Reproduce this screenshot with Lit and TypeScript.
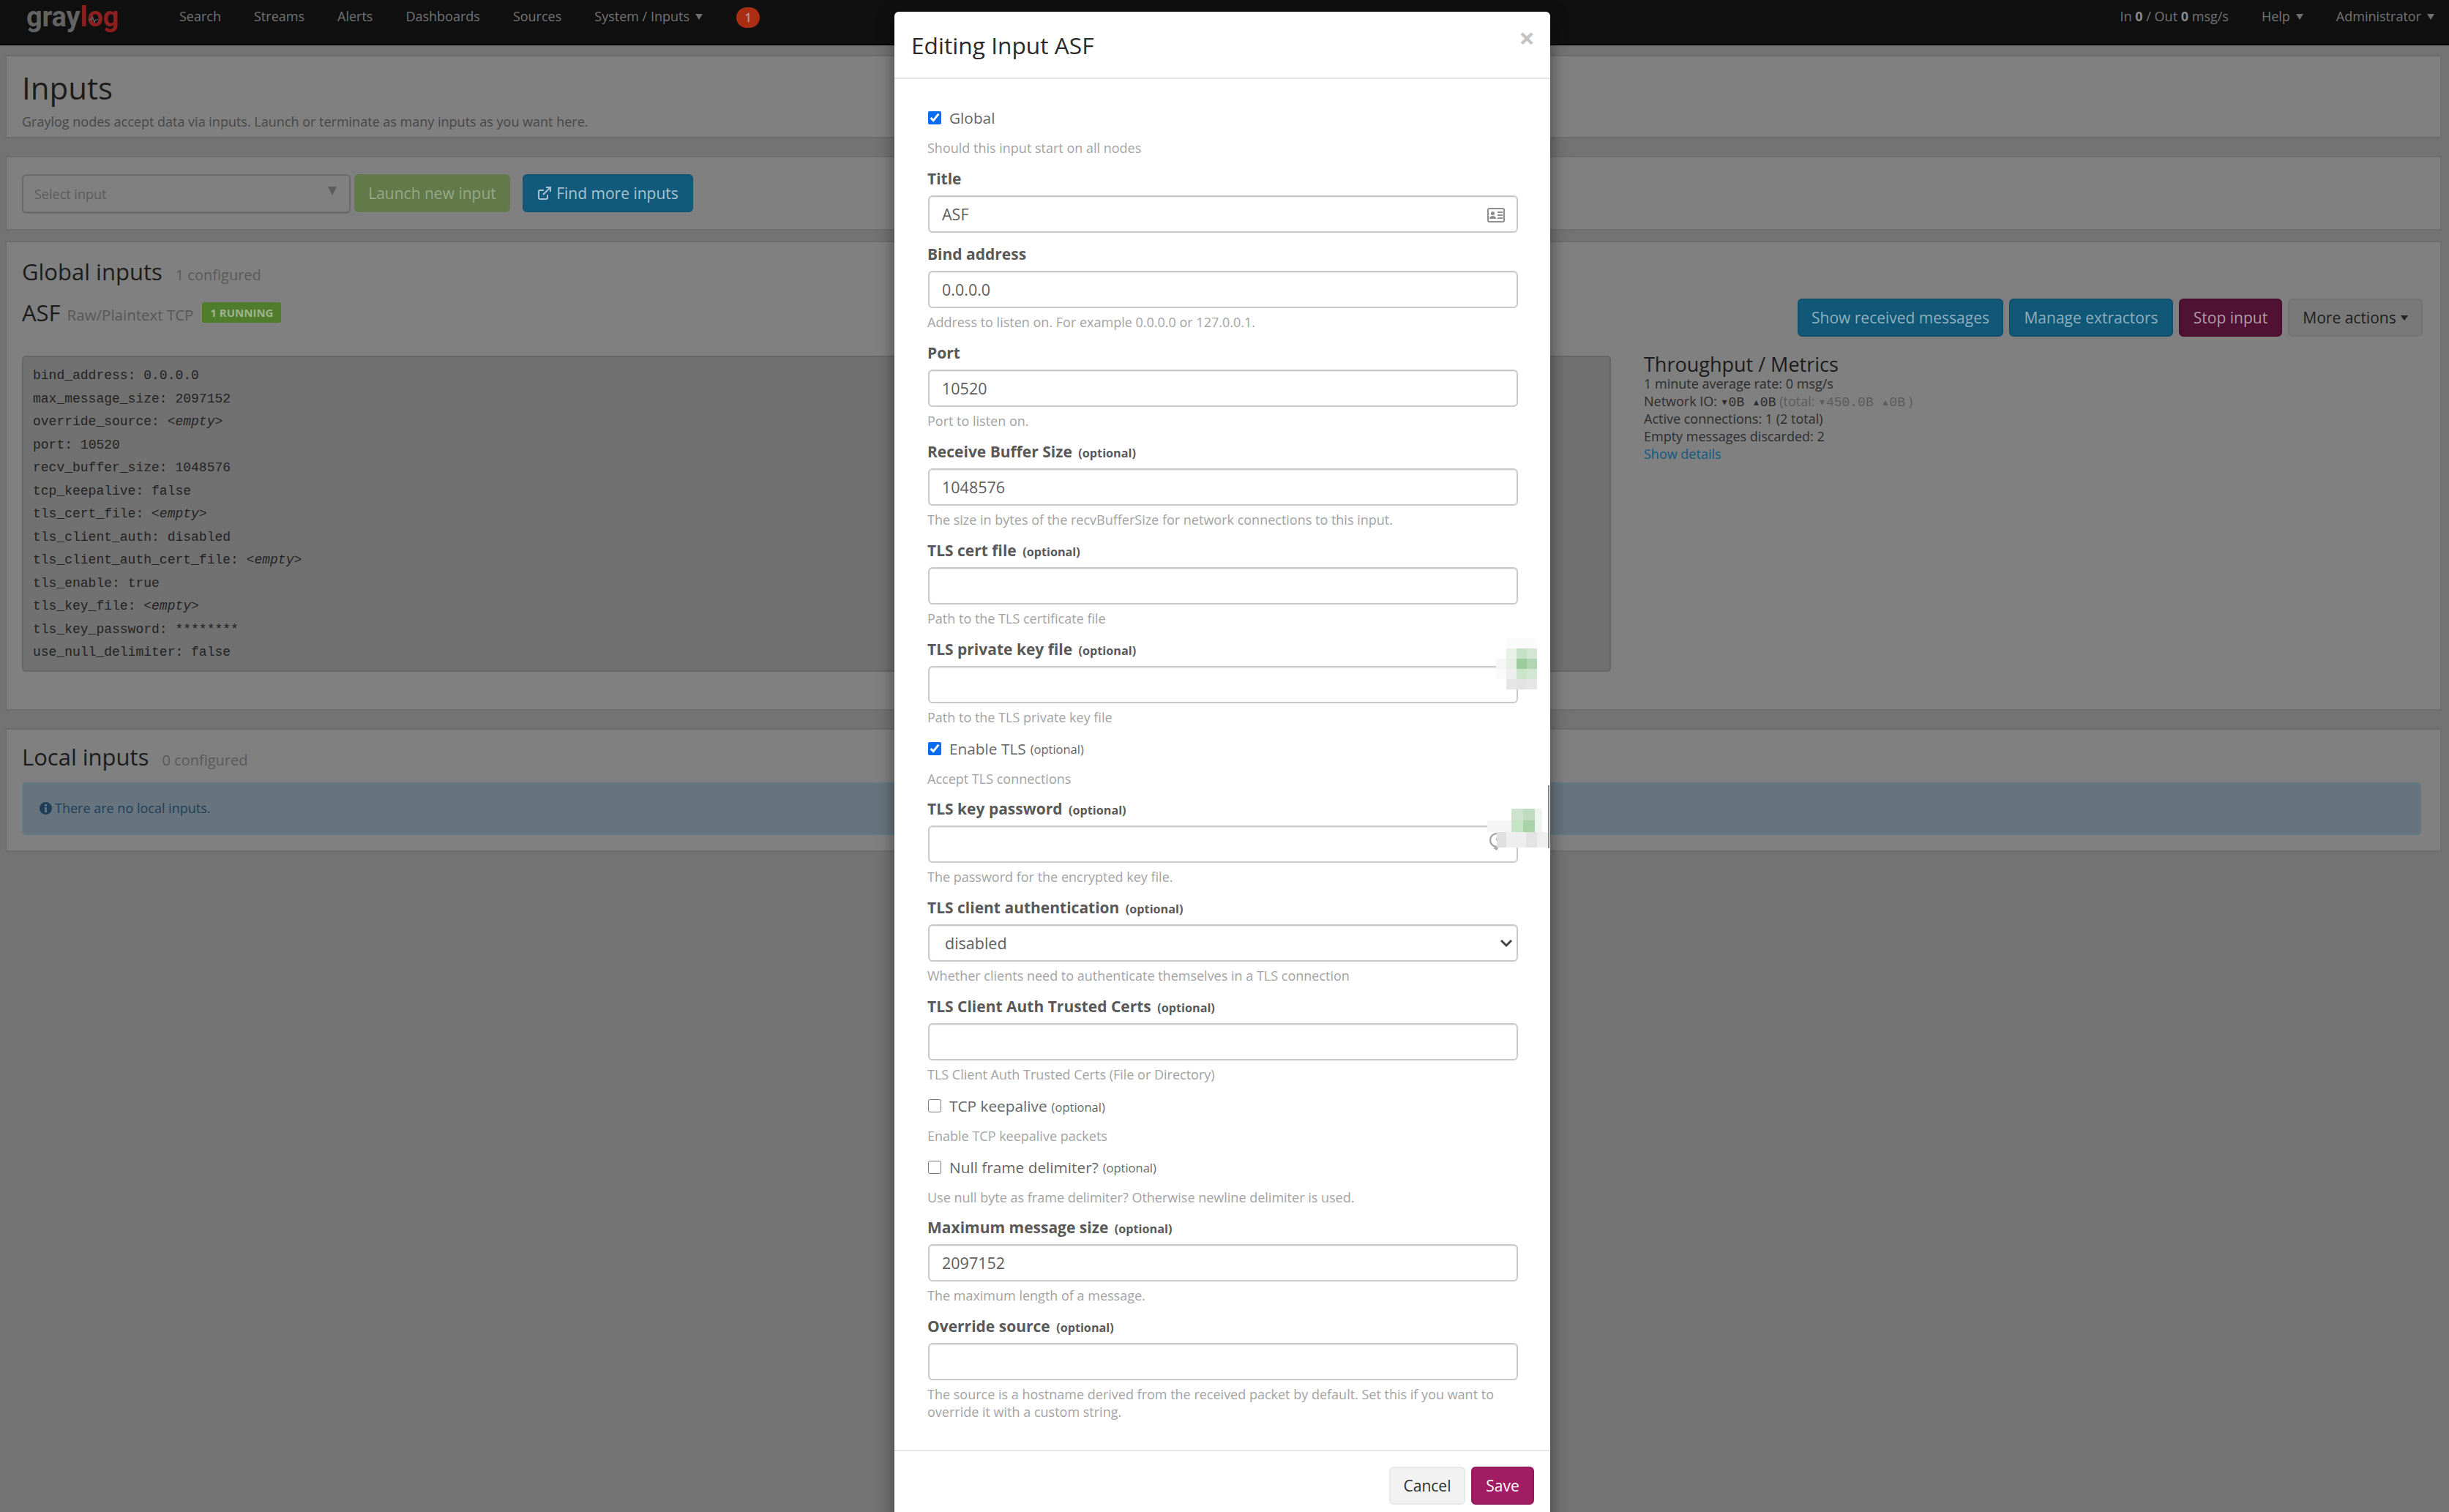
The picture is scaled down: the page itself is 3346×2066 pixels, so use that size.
import { LitElement, html, css, svg } from 'lit';
import { customElement } from 'lit/decorators.js';

type Field = {
  kind: 'text' | 'check' | 'select';
  label: string;
  optional?: boolean;
  value?: string;
  checked?: boolean;
  help?: string;
  icon?: 'card' | 'none';
};

const FIELDS: Field[] = [
  { kind: 'check', label: 'Global', checked: true, help: 'Should this input start on all nodes' },
  { kind: 'text', label: 'Title', value: 'ASF', icon: 'card' },
  { kind: 'text', label: 'Bind address', value: '0.0.0.0', help: 'Address to listen on. For example 0.0.0.0 or 127.0.0.1.' },
  { kind: 'text', label: 'Port', value: '10520', help: 'Port to listen on.' },
  { kind: 'text', label: 'Receive Buffer Size', optional: true, value: '1048576', help: 'The size in bytes of the recvBufferSize for network connections to this input.' },
  { kind: 'text', label: 'TLS cert file', optional: true, help: 'Path to the TLS certificate file' },
  { kind: 'text', label: 'TLS private key file', optional: true, help: 'Path to the TLS private key file' },
  { kind: 'check', label: 'Enable TLS', optional: true, checked: true, help: 'Accept TLS connections' },
  { kind: 'text', label: 'TLS key password', optional: true, help: 'The password for the encrypted key file.' },
  { kind: 'select', label: 'TLS client authentication', optional: true, value: 'disabled', help: 'Whether clients need to authenticate themselves in a TLS connection' },
  { kind: 'text', label: 'TLS Client Auth Trusted Certs', optional: true, help: 'TLS Client Auth Trusted Certs (File or Directory)' },
  { kind: 'check', label: 'TCP keepalive', optional: true, help: 'Enable TCP keepalive packets' },
  { kind: 'check', label: 'Null frame delimiter?', optional: true, help: 'Use null byte as frame delimiter? Otherwise newline delimiter is used.' },
  { kind: 'text', label: 'Maximum message size', optional: true, value: '2097152', help: 'The maximum length of a message.' },
  { kind: 'text', label: 'Override source', optional: true, help: 'The source is a hostname derived from the received packet by default. Set this if you want to override it with a custom string.' },
];

const CONFIG: [string, string, boolean?][] = [
  ['bind_address', '0.0.0.0'],
  ['max_message_size', '2097152'],
  ['override_source', '<empty>', true],
  ['port', '10520'],
  ['recv_buffer_size', '1048576'],
  ['tcp_keepalive', 'false'],
  ['tls_cert_file', '<empty>', true],
  ['tls_client_auth', 'disabled'],
  ['tls_client_auth_cert_file', '<empty>', true],
  ['tls_enable', 'true'],
  ['tls_key_file', '<empty>', true],
  ['tls_key_password', '********'],
  ['use_null_delimiter', 'false'],
];

// pixelated password manager badges that sit over the two key fields
const BADGE_A: [number, number, number, number, string][] = [
  [14, 0, 42, 14, '#fbfbfb'],
  [14, 14, 14, 14, '#e9f2e9'], [28, 14, 14, 14, '#c6e0c6'], [42, 14, 14, 14, '#d3e5d3'],
  [0, 28, 14, 14, '#f6f6f6'], [14, 28, 14, 14, '#e6efe6'], [28, 28, 14, 14, '#9ccb9c'], [42, 28, 14, 14, '#b2d6b2'],
  [0, 42, 14, 14, '#fafafa'], [14, 42, 14, 14, '#eeeeee'], [28, 42, 14, 14, '#cbe5cb'], [42, 42, 14, 14, '#d3e8d3'],
  [14, 56, 14, 14, '#e6e6e6'], [28, 56, 14, 14, '#e3e3e3'], [42, 56, 14, 14, '#e6e6e6'],
];
const BADGE_B: [number, number, number, number, string][] = [
  [33, 0, 16, 16, '#cde3cd'], [49, 0, 16, 16, '#c0dcc0'], [65, 0, 10, 16, '#eef5ee'],
  [0, 16, 33, 16, '#f5f5f5'], [33, 16, 16, 16, '#c5e3c5'], [49, 16, 16, 16, '#a8d4a8'], [65, 16, 10, 16, '#eef5ee'],
  [13, 32, 13, 21, '#e0e0e0'], [26, 32, 27, 21, '#eeeeee'], [53, 32, 15, 21, '#e3e3e3'], [68, 32, 15, 21, '#efefef'],
];

@customElement('app-root')
export class AppRoot extends LitElement {
  static styles = css`
    :host {
      display: block;
      position: relative;
      height: 2066px;
      overflow: hidden;
      background: #737373;
      font-family: 'Open Sans', sans-serif;
      color: #222;
    }

    /* navbar */
    .navbar {
      display: flex;
      align-items: flex-start;
      height: 60px;
      background: #101010;
      border-bottom: 2px solid #000;
      padding: 0 20px 0 36px;
    }
    .logo {
      position: relative;
      width: 209px;
      margin-top: 3px;
      font-family: Roboto, sans-serif;
      font-size: 38px;
      font-weight: 700;
      line-height: 40px;
      letter-spacing: -0.2px;
      color: #646464;
    }
    .logo span { color: #8f1f1f; }
    .logo svg { position: absolute; left: 85px; top: 19px; }
    .navbar a {
      font-size: 18px;
      line-height: 44px;
      color: #747474;
      margin-right: 45px;
      white-space: nowrap;
    }
    .navbar b { color: #888; }
    .caret {
      display: inline-block;
      width: 0;
      height: 0;
      margin-left: 8px;
      vertical-align: 2px;
      border-top: 8px solid #6f6f6f;
      border-left: 5.5px solid transparent;
      border-right: 5.5px solid transparent;
    }
    .badge {
      width: 32px;
      height: 28px;
      margin-top: 10px;
      margin-left: 1px;
      border-radius: 14px;
      background: #ab2e12;
      color: #bb9b92;
      font-size: 16px;
      font-weight: 600;
      line-height: 28px;
      text-align: center;
    }
    .spacer { flex: 1; }
    .navbar a.last { margin-right: 0; }

    /* page rows */
    .page { padding: 13px 10px 0 7px; }
    .row {
      background: #808080;
      border: 2px solid #6e6e6e;
      padding: 0 21px;
    }
    .head { height: 114px; margin-bottom: 24px; padding-top: 10px; box-sizing: border-box; }
    .head h1 { margin: 0; font-size: 42px; font-weight: 400; line-height: 66px; color: #1c1c1c; }
    .head p { margin: 0; font-size: 18px; line-height: 26px; color: #484848; }

    .actions {
      display: flex;
      align-items: flex-start;
      height: 102px;
      box-sizing: border-box;
      margin-bottom: 14px;
      padding-top: 23px;
    }
    .picker {
      display: flex;
      align-items: center;
      justify-content: space-between;
      box-sizing: border-box;
      width: 449px;
      height: 54px;
      margin-right: 5px;
      padding: 0 17px 0 15px;
      border: 2px solid #6a6a6a;
      border-bottom-width: 3px;
      border-radius: 6px;
      font-size: 18px;
      color: #5c5c5c;
    }
    .picker i {
      border-top: 12px solid #5c5c5c;
      border-left: 6px solid transparent;
      border-right: 6px solid transparent;
      margin-top: -8px;
    }
    .btn {
      box-sizing: border-box;
      display: inline-flex;
      align-items: center;
      justify-content: center;
      height: 52px;
      border-radius: 6px;
      border: 2px solid transparent;
      font-size: 21px;
      white-space: nowrap;
    }
    .btn.launch { width: 213px; margin-right: 17px; background: #627a49; border-color: #64794e; color: #95a888; }
    .btn.find { width: 233px; background: #125a7c; border-color: #115474; color: #a9c2cf; }
    .btn.find svg { margin-right: 6px; }

    .inputs { height: 642px; box-sizing: border-box; margin-bottom: 24px; padding-top: 16px; position: relative; }
    .section-title { margin: 0; display: flex; align-items: baseline; font-size: 31px; font-weight: 400; line-height: 48px; color: #1c1c1c; }
    .section-title small { margin-left: 18px; font-size: 20px; color: #5a5a5a; }
    .entity { display: flex; align-items: flex-start; justify-content: space-between; margin-top: 2px; height: 68px; margin-right: 3px; }
    .entity-name { display: flex; align-items: center; height: 38px; margin-top: 6px; }
    .entity-name strong { font-size: 31px; font-weight: 400; color: #1c1c1c; }
    .entity-name em { margin-left: 9px; margin-top: 6px; font-style: normal; font-size: 20.5px; color: #575757; }
    .running {
      margin-left: 12px;
      width: 108px;
      height: 28px;
      border-radius: 3px;
      background: #4f7d2c;
      color: #9eb28f;
      font-size: 15px;
      font-weight: 700;
      line-height: 28px;
      text-align: center;
    }
    .entity-actions { display: flex; gap: 8px; margin-top: 6px; }
    .btn.info { background: #115878; border-color: #10506e; color: #8eaebe; }
    .btn.w1 { width: 281px; }
    .btn.w2 { width: 224px; }
    .btn.stop { width: 141px; background: #4f1232; border-color: #490f2d; color: #b09aa8; }
    .btn.more { width: 184px; background: #797979; border-color: #737373; color: #202020; }
    .btn.more .caret { border-top-color: #202020; margin-left: 6px; border-top-width: 7px; border-left-width: 5px; border-right-width: 5px; vertical-align: 1px; }

    .details { display: flex; align-items: flex-start; margin-top: 16px; }
    pre {
      box-sizing: border-box;
      width: 2171px;
      height: 432px;
      margin: 0 45px 0 0;
      padding: 10px 13px;
      background: #717171;
      border: 2px solid #676767;
      border-radius: 5px;
      font-family: 'Liberation Mono', monospace;
      font-size: 18px;
      line-height: 31.5px;
      color: #232323;
    }
    pre span { display: block; }
    .metrics { font-size: 18px; line-height: 24px; color: #2d2d2d; margin-top: -2px; }
    .metrics h3 { margin: 0; font-size: 27px; font-weight: 400; line-height: 28px; color: #1c1c1c; }
    .metrics div { white-space: nowrap; height: 24px; }
    .metrics code { font-family: 'Liberation Mono', monospace; font-size: 18px; line-height: 1; }
    .metrics .total { color: #5c5c5c; }
    .metrics a { color: #0f5a80; }

    .local { height: 169px; box-sizing: border-box; padding-top: 13px; }
    .alert {
      display: flex;
      align-items: center;
      gap: 4px;
      box-sizing: border-box;
      height: 72px;
      margin-top: 6px;
      margin-right: 5px;
      padding: 0 0 2px 22px;
      background: #67747d;
      border: 2px solid #5f7b84;
      border-radius: 5px;
      font-size: 18px;
      color: #1f3f58;
    }

    /* modal */
    .modal {
      position: absolute;
      top: 16px;
      left: 1222px;
      width: 896px;
      height: 2100px;
      background: #fff;
      border-radius: 6px 6px 0 0;
      box-shadow: 0 7px 22px rgba(0, 0, 0, 0.5);
    }
    .modal-head {
      display: flex;
      justify-content: space-between;
      box-sizing: border-box;
      height: 92px;
      padding: 21px 21px 0 23px;
      border-bottom: 2px solid #e5e5e5;
    }
    .modal-head h2 { margin: 0; font-size: 31.7px; font-weight: 400; line-height: 50px; color: #2a2a2a; }
    .close { font-size: 38px; font-weight: 700; line-height: 34px; color: #c4c4c4; margin-top: -3px; }
    .modal-body { height: 1875px; box-sizing: border-box; padding: 39px 44px 0 45px; border-bottom: 2px solid #e5e5e5; }
    .group { margin-bottom: 17px; }
    .group.nohelp { margin-bottom: 16px; }
    .group.check { padding-top: 1px; margin-bottom: 16.5px; }
    .group label.title {
      display: block;
      font-size: 21px;
      font-weight: 700;
      line-height: 26px;
      margin-bottom: 10px;
      color: #595959;
      white-space: nowrap;
    }
    .group label.title small { font-size: 16.2px; line-height: 1; margin-left: 3px; color: #595959; }
    .control { position: relative; display: block; }
    .control input, .control select {
      display: block;
      box-sizing: border-box;
      width: 806px;
      height: 51px;
      margin: 0 0 0 1px;
      padding: 0 17px;
      border: 2px solid #c9c9c9;
      border-radius: 6px;
      box-shadow: inset 0 1px 1px rgba(0, 0, 0, 0.075);
      background: #fff;
      font-family: 'Open Sans', sans-serif;
      font-size: 21.5px;
      color: #5e5e5e;
      outline: none;
      appearance: none;
    }
    .control select { padding-left: 21px; }
    .control svg { position: absolute; }
    .control .card { right: 18px; top: 17px; }
    .control .chevron { right: 6px; top: 18px; }
    .checkline { display: flex; align-items: center; height: 26px; font-size: 20.8px; color: #666; white-space: nowrap; }
    .checkline input {
      width: 18px;
      height: 18px;
      margin: 0 11px 0 1px;
      accent-color: #0a6cf0;
    }
    .checkline small { font-size: 16.5px; margin-left: 6px; margin-top: 2px; }
    .help { margin-top: 7px; font-size: 18px; line-height: 24px; color: #a3a3a3; }
    .group.check .help { margin-top: 16px; }

    .modal-foot { display: flex; justify-content: flex-end; gap: 8px; padding: 21px 22px 0 0; }
    .btn.cancel { width: 104px; background: #f2f2f2; border-color: #e8e8e8; color: #2d2d2d; }
    .btn.save { width: 86px; background: #a01d63; border-color: #931a5b; color: #fff; }

    .pixels { position: absolute; }
    .scroll-thumb { position: absolute; left: 893px; top: 1057px; width: 2px; height: 86px; background: #888; }
  `;

  private renderField(f: Field) {
    const optional = f.optional ? html`<small>(optional)</small>` : '';
    const help = f.help ? html`<div class="help">${f.help}</div>` : '';
    if (f.kind === 'check') {
      return html`<div class="group check">
        <div class="checkline">
          <input type="checkbox" .checked=${!!f.checked} />${f.label}${optional}
        </div>
        ${help}
      </div>`;
    }
    return html`<div class="group ${f.help ? '' : 'nohelp'}">
      <label class="title">${f.label} ${optional}</label>
      <span class="control">
        ${f.kind === 'select'
          ? html`<select><option>${f.value}</option></select>
              <svg class="chevron" width="20" height="16" viewBox="0 0 20 16">
                <path d="M3 4l7 7 7-7" fill="none" stroke="#444" stroke-width="3" />
              </svg>`
          : html`<input type="text" .value=${f.value ?? ''} />`}
        ${f.icon === 'card'
          ? html`<svg class="card" width="24" height="20" viewBox="0 0 24 20">
              <rect x="1" y="1" width="22" height="18" rx="2" fill="none" stroke="#8e8e8e" stroke-width="2" />
              <circle cx="7.5" cy="7.5" r="2.6" fill="#8e8e8e" />
              <path d="M3 15c0-3 2-4 4.500-4s4.500 1 4.500 4z" fill="#8e8e8e" />
              <path d="M14 6h7M14 10h7M14 14h7" stroke="#8e8e8e" stroke-width="2" />
            </svg>`
          : ''}
      </span>
      ${help}
    </div>`;
  }

  private renderPixels(cells: [number, number, number, number, string][], left: number, top: number, w: number, h: number) {
    return html`<svg class="pixels" style="left:${left}px;top:${top}px" width=${w} height=${h}>
      ${cells.map(([x, y, cw, ch, fill]) => svg`<rect x=${x} y=${y} width=${cw} height=${ch} fill=${fill} />`)}
    </svg>`;
  }

  render() {
    return html`
      <div class="navbar">
        <div class="logo">gray<span>log</span>
          <svg width="14" height="10" viewBox="0 0 14 10">
            <path d="M0 5h4l1.500-4 2.500 8 1.500-4h4" fill="none" stroke="#6a6a6a" stroke-width="1.200" />
          </svg>
        </div>
        <a>Search</a>
        <a>Streams</a>
        <a>Alerts</a>
        <a>Dashboards</a>
        <a>Sources</a>
        <a>System / Inputs<i class="caret"></i></a>
        <div class="badge">1</div>
        <div class="spacer"></div>
        <a>In <b>0</b> / Out <b>0</b> msg/s</a>
        <a>Help<i class="caret"></i></a>
        <a class="last">Administrator<i class="caret"></i></a>
      </div>

      <div class="page">
        <div class="row head">
          <h1>Inputs</h1>
          <p>Graylog nodes accept data via inputs. Launch or terminate as many inputs as you want here.</p>
        </div>

        <div class="row actions">
          <div class="picker">Select input<i></i></div>
          <div class="btn launch">Launch new input</div>
          <div class="btn find">
            <svg width="20" height="20" viewBox="0 0 20 20" fill="none" stroke="#a9c2cf" stroke-width="2">
              <path d="M14 12v4a2 2 0 0 1-2 2H4a2 2 0 0 1-2-2V8a2 2 0 0 1 2-2h5" />
              <path d="M8 12L18 2M12 2h6v6" />
            </svg>
            Find more inputs
          </div>
        </div>

        <div class="row inputs">
          <h2 class="section-title">Global inputs <small>1 configured</small></h2>
          <div class="entity">
            <div class="entity-name">
              <strong>ASF</strong><em>Raw/Plaintext TCP</em>
              <div class="running">1 RUNNING</div>
            </div>
            <div class="entity-actions">
              <div class="btn info w1">Show received messages</div>
              <div class="btn info w2">Manage extractors</div>
              <div class="btn stop">Stop input</div>
              <div class="btn more">More actions<i class="caret"></i></div>
            </div>
          </div>
          <div class="details">
            <pre>${CONFIG.map(
              ([k, v, empty]) => html`<span>${k}: ${empty ? html`<i>${v}</i>` : v}</span>`
            )}</pre>
            <div class="metrics">
              <h3>Throughput / Metrics</h3>
              <div>1 minute average rate: 0 msg/s</div>
              <div>Network IO: <code>▾0B ▴0B</code> <span class="total">(total: <code>▾450.0B ▴0B</code> )</span></div>
              <div>Active connections: 1 (2 total)</div>
              <div>Empty messages discarded: 2</div>
              <a>Show details</a>
            </div>
          </div>
        </div>

        <div class="row local">
          <h2 class="section-title">Local inputs <small>0 configured</small></h2>
          <div class="alert">
            <svg width="17" height="17" viewBox="0 0 17 17">
              <circle cx="8.500" cy="8.500" r="8.500" fill="#1f3f58" />
              <rect x="7" y="3" width="3" height="2.600" fill="#67747d" />
              <rect x="7" y="7" width="3" height="7" fill="#67747d" />
            </svg>
            There are no local inputs.
          </div>
        </div>
      </div>

      <div class="modal">
        <div class="modal-head">
          <h2>Editing Input ASF</h2>
          <span class="close">×</span>
        </div>
        <div class="modal-body">${FIELDS.map((f) => this.renderField(f))}</div>
        <div class="modal-foot">
          <div class="btn cancel">Cancel</div>
          <div class="btn save">Save</div>
        </div>
        ${this.renderPixels(BADGE_A, 822, 856, 60, 70)}
        <svg class="pixels" style="left:812px;top:1120px" width="20" height="28" viewBox="0 0 20 28">
          <circle cx="11" cy="12" r="9" fill="none" stroke="#a8a8a8" stroke-width="2.500" />
          <circle cx="13" cy="11" r="3" fill="#a8a8a8" />
          <path d="M6 23l8-2-3 5z" fill="#a8a8a8" />
        </svg>
        ${this.renderPixels(BADGE_B, 810, 1089, 83, 53)}
        <div class="scroll-thumb"></div>
      </div>
    `;
  }
}

declare global {
  interface HTMLElementTagNameMap {
    'app-root': AppRoot;
  }
}
